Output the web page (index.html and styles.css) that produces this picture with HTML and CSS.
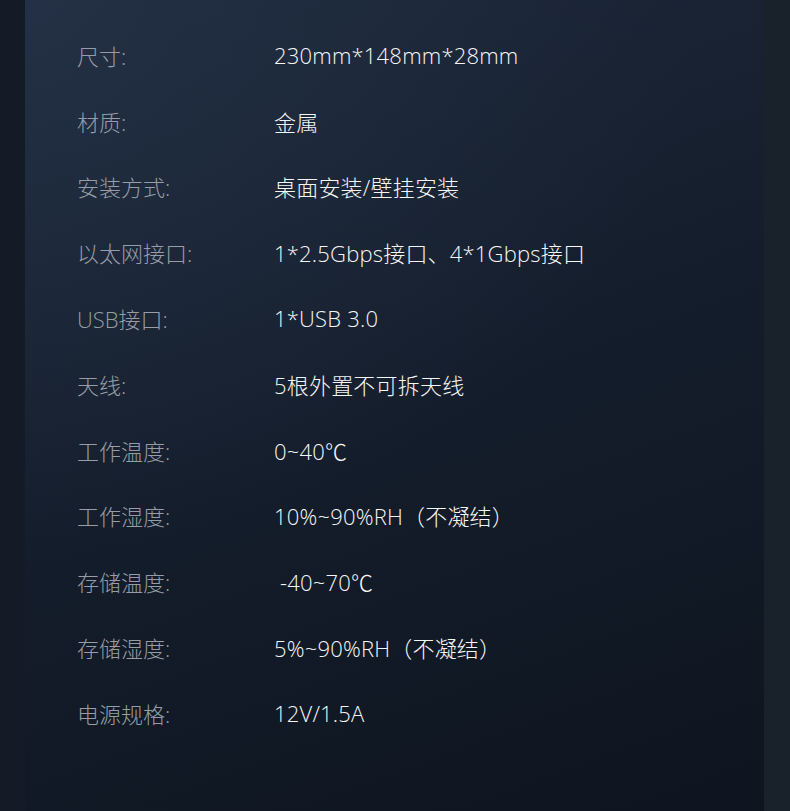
FILE: index.html
```html
<!DOCTYPE html>
<html lang="zh-CN">
<head>
    <meta charset="UTF-8">
    <meta name="viewport" content="width=device-width, initial-scale=1.0">
    <title>产品参数</title>
    <link rel="stylesheet" href="styles.css">
</head>
<body>
    <div class="page">
        <div class="panel">
            <dl class="specs">
                <div class="spec-row"><dt>尺寸:</dt><dd>230mm*148mm*28mm</dd></div>
                <div class="spec-row"><dt>材质:</dt><dd>金属</dd></div>
                <div class="spec-row"><dt>安装方式:</dt><dd>桌面安装/壁挂安装</dd></div>
                <div class="spec-row"><dt>以太网接口:</dt><dd>1*2.5Gbps接口、4*1Gbps接口</dd></div>
                <div class="spec-row"><dt>USB接口:</dt><dd>1*USB 3.0</dd></div>
                <div class="spec-row"><dt>天线:</dt><dd>5根外置不可拆天线</dd></div>
                <div class="spec-row"><dt>工作温度:</dt><dd>0~40℃</dd></div>
                <div class="spec-row"><dt>工作湿度:</dt><dd>10%~90%RH（不凝结）</dd></div>
                <div class="spec-row"><dt>存储温度:</dt><dd> -40~70℃</dd></div>
                <div class="spec-row"><dt>存储湿度:</dt><dd>5%~90%RH（不凝结）</dd></div>
                <div class="spec-row"><dt>电源规格:</dt><dd>12V/1.5A</dd></div>
            </dl>
        </div>
    </div>
</body>
</html>
```

FILE: styles.css
```css
html, body {
    margin: 0;
    padding: 0;
    height: 100%;
}

body {
    font-family: "Open Sans", "Noto Sans CJK SC", sans-serif;
    background: linear-gradient(90deg, #141b26 0px, #141b26 25px, #0f1620 764px, #19212b 764px);
    overflow: hidden;
}

.page {
    display: flex;
    height: 811px;
    padding: 0 26px 0 25px;
}

.panel {
    flex: 1;
    background:
        radial-gradient(ellipse 90% 70% at 0% 0%, rgba(40, 55, 78, 0.55), rgba(40, 55, 78, 0) 100%),
        linear-gradient(160deg, #1d283a 0%, #141d2b 50%, #0e1520 100%);
    padding: 22px 0 0 52px;
}

.specs {
    margin: 0;
    font-size: 22px;
}

.spec-row {
    display: flex;
    align-items: center;
    height: 65.8px;
}

.spec-row dt {
    width: 197px;
    flex: none;
    color: #979da6;
    font-weight: 300;
}

.spec-row dd {
    margin: 0;
    color: #f6f6f6;
    white-space: pre;
    font-weight: 300;
    letter-spacing: 0.2px;
}
```
